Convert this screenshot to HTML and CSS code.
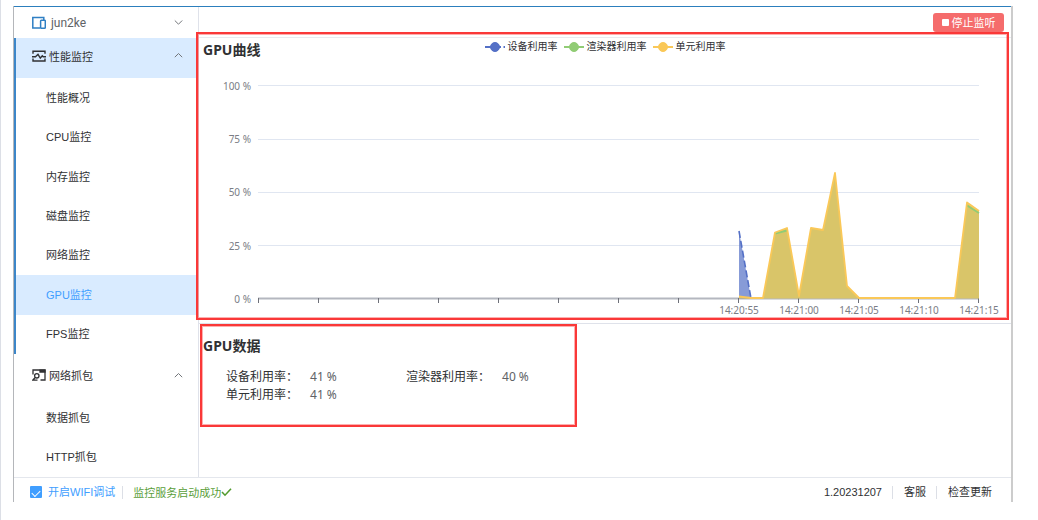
FILE: index.html
```
<!DOCTYPE html>
<html lang="zh-CN">
<head>
<meta charset="utf-8">
<title>GPU监控</title>
<link rel="stylesheet" href="styles.css">
</head>
<body>
<div class="window">
  <div class="body">
    <aside class="sidebar">
      <button class="device" type="button">
        <svg class="icon" viewBox="0 0 14 14" fill="none" stroke="#2f7fc4" stroke-width="1.5"><path d="M8 12H.8V1.500H11.800V4"/><rect x="8.600" y="4.300" width="4.700" height="7.900" rx=".8"/></svg>
        <span class="label">jun2ke</span>
        <svg class="chevron" viewBox="0 0 9 9"><path d="M.8 2.500 4.500 6.200 8.200 2.500"/></svg>
      </button>
      <nav class="menu">
        <button class="group group-active" type="button">
          <svg class="icon" viewBox="0 0 14 14" fill="none" stroke="#303133" stroke-width="1.400"><path d="M1 4.800V2.200H13V4.800M1 9.500V12H13V9.500"/><path d="M0 7.800H3.500L6 5.300 8.300 9 10.300 6.800 11.200 7.800H14"/></svg>
          <span class="label">性能监控</span>
          <svg class="chevron" viewBox="0 0 9 9"><path d="M.8 6.200 4.500 2.500 8.200 6.200"/></svg>
        </button>
        <div class="items items-long">
          <a href="#">性能概况</a>
          <a href="#">CPU监控</a>
          <a href="#">内存监控</a>
          <a href="#">磁盘监控</a>
          <a href="#">网络监控</a>
          <a href="#" class="current">GPU监控</a>
          <a href="#">FPS监控</a>
        </div>
        <button class="group" type="button">
          <svg class="icon" viewBox="0 0 14 14" fill="none" stroke="#303133" stroke-width="1.300"><path d="M1 6.500V2H13V12H8.500"/><path d="M8 2.200H13V4H8z" fill="#303133"/><circle cx="4.800" cy="7.800" r="2.200"/><path d="M3.200 9.500.8 12.200H5.500"/></svg>
          <span class="label">网络抓包</span>
          <svg class="chevron" viewBox="0 0 9 9"><path d="M.8 6.200 4.500 2.500 8.200 6.200"/></svg>
        </button>
        <div class="items">
          <a href="#">数据抓包</a>
          <a href="#">HTTP抓包</a>
        </div>
      </nav>
    </aside>
    <main class="main">
      <div class="toolbar">
        <button class="stop" type="button"><span class="stop-mark"></span>停止监听</button>
      </div>
      <section class="curve">
        <header class="curve-head">
          <h2>GPU曲线</h2>
          <ul class="legend">
            <li><svg viewBox="0 0 20 10" stroke="#5470c6" fill="#5470c6"><path d="M0 5H16M18.500 5H20" stroke-width="2"/><circle cx="10" cy="5" r="4.500"/></svg>设备利用率</li>
            <li><svg viewBox="0 0 20 10" stroke="#91cc75" fill="#91cc75"><path d="M0 5H20" stroke-width="2"/><circle cx="10" cy="5" r="4.500"/></svg>渲染器利用率</li>
            <li><svg viewBox="0 0 20 10" stroke="#fac858" fill="#fac858"><path d="M0 5H20" stroke-width="2"/><circle cx="10" cy="5" r="4.500"/></svg>单元利用率</li>
          </ul>
        </header>
        <svg class="chart" viewBox="199 62 812 261" role="img" aria-label="GPU曲线">
          <path class="grid" d="M258 85.500H979M258 139.500H979M258 192.500H979M258 245.500H979"/>
          <path class="axis" d="M258 298.500H979"/>
          <path class="ticks" d="M258.500 298v5M318.500 298v5M378.500 298v5M438.500 298v5M498.500 298v5M558.500 298v5M618.500 298v5M678.500 298v5M738.500 298v5M798.500 298v5M858.500 298v5M918.500 298v5M978.500 298v5"/>
          <path d="M739 231 751 298.500H739z" fill="#5470c6" opacity=".7"/>
          <path d="M739 231 751 298.500" fill="none" stroke="#5470c6" stroke-width="1.600" stroke-dasharray="7 3"/>
          <path class="fill" d="M739 297 751 298.500H763L775 232.500 787 228 799 295 811 228 823 230 835 173 847 286 859 298.500H955L967 203 979 211V298.500H739z"/>
          <path d="M775 233.500 787 230.500M967 205.500 979 213" fill="none" stroke="#91cc75" stroke-width="2"/>
          <path d="M739 296.500 751 298H763L775 232.500 787 228 799 296 811 228 823 230 835 173 847 286 859 298H955L967 202.500 979 211" fill="none" stroke="#fac858" stroke-width="1.800" stroke-linejoin="round"/>
          <g text-anchor="end">
            <text x="251" y="90">100 %</text><text x="251" y="143">75 %</text><text x="251" y="196">50 %</text><text x="251" y="250">25 %</text><text x="251" y="303">0 %</text>
          </g>
          <g text-anchor="middle">
            <text x="739" y="314">14:20:55</text><text x="799" y="314">14:21:00</text><text x="859" y="314">14:21:05</text><text x="919" y="314">14:21:10</text><text x="979" y="314">14:21:15</text>
          </g>
        </svg>
        <div class="mark mark-curve"></div>
      </section>
      <section class="data">
        <h2>GPU数据</h2>
        <dl class="values">
          <div><dt>设备利用率：</dt><dd>41 %</dd></div>
          <div><dt>渲染器利用率：</dt><dd>40 %</dd></div>
          <div><dt>单元利用率：</dt><dd>41 %</dd></div>
        </dl>
        <div class="mark mark-data"></div>
      </section>
    </main>
  </div>
  <footer class="footer">
    <label class="wifi"><input type="checkbox" checked>开启WIFI调试</label>
    <span class="status">监控服务启动成功<svg viewBox="0 0 11 10"><path d="M1 5 4 8.200 10 1.800"/></svg></span>
    <span class="version">1.20231207</span>
    <a href="#">客服</a>
    <a href="#">检查更新</a>
  </footer>
</div>
</body>
</html>
```
FILE: styles.css
```
* { box-sizing: border-box; }
body {
  margin: 0;
  min-height: 100vh;
  padding: 6px 25px 18px 13px;
  background: #fff;
  box-shadow: inset 1px 0 #dcdfe6;
  color: #303133;
  font-family: "Liberation Sans", "Noto Sans CJK SC", sans-serif;
  font-size: 11px;
  display: flex;
}
button { border: 0; margin: 0; font: inherit; color: inherit; background: none; }
a { color: inherit; text-decoration: none; }
h2 {
  margin: 0;
  font: bold 14px/24px "Noto Sans", "Noto Sans CJK SC", sans-serif;
}
.window {
  flex: 1;
  display: flex;
  flex-direction: column;
  border-left: 1px solid #b4b6ba;
  border-right: 2px solid #ccc;
  background: linear-gradient(#2c7fbd, #2c7fbd) top / 100% 1px no-repeat;
  padding-top: 1px;
}
.body { flex: 1; display: flex; }

.sidebar {
  width: 185px;
  border-right: 1px solid #dfe2ea;
  display: flex;
  flex-direction: column;
}
.device, .group {
  display: flex;
  align-items: center;
  width: 100%;
  padding: 0 15px 0 18px;
  text-align: left;
}
.device { height: 31px; gap: 5px; font: 12px Roboto, sans-serif; color: #606266; }
.group { height: 44px; gap: 3px; padding-bottom: 2px; }
.group-active { height: 40px; padding-bottom: 5px; background: #d9ebff; }
.label { flex: 1; }
.icon { width: 14px; height: 14px; }
.chevron { width: 9px; height: 9px; fill: none; stroke: #73767a; stroke-width: 1; }
.menu { flex: 1; }
.group-active, .items-long { border-left: 2px solid #3c86c8; }
.group-active { padding-left: 16px; }
.items { display: grid; grid-auto-rows: 1fr; height: 79px; padding-left: 2px; }
.items-long { height: 276px; padding-left: 0; }
.items a { display: flex; align-items: center; padding: 0 0 2px 30px; }
.items .current { background: #d9ebff; color: #409eff; }

.main { flex: 1; display: flex; flex-direction: column; }
.toolbar {
  height: 31px;
  padding: 6px 7px 0;
  display: flex;
  justify-content: flex-end;
  border-bottom: 1px solid #e9ebf0;
}
.stop {
  width: 71px;
  height: 19px;
  padding: 0 0 1px;
  display: flex;
  align-items: center;
  justify-content: center;
  gap: 3px;
  border-radius: 3px;
  background: #f56c6c;
  color: #fff;
}
.stop-mark { width: 7px; height: 7px; border-radius: 1px; background: #fff; }
.curve { position: relative; border-bottom: 1px solid #dfe2ea; }
.curve-head { display: grid; grid-template-columns: 1fr auto 1fr; padding-left: 4px; height: 24px; }
.legend {
  display: flex;
  gap: 6px;
  margin: 0;
  padding: 0 4px 0 0;
  list-style: none;
  font-size: 10px;
  line-height: 18px;
}
.legend li { display: flex; align-items: center; gap: 3px; height: 18px; }
.legend svg { width: 20px; height: 10px; }
.chart { display: block; width: 100%; }
.chart text { font: 10px "Noto Sans", sans-serif; fill: #7a7d85; }
.grid { stroke: #e0e6f1; }
.axis { stroke: #b4b7bf; stroke-width: 2; }
.ticks { stroke: #6e7079; }
.fill { fill: #d9c569; }
.mark {
  position: absolute;
  pointer-events: none;
  border: 2px solid #fa3838;
  box-shadow: inset 0 0 0 1px #fa383866;
}
.mark-curve { inset: -6px 2px 3px -3px; z-index: 1; }
.mark-data { left: 1px; top: 0; width: 377px; height: 103px; }
.data { position: relative; flex: 1; padding: 10px 4px; }
.values {
  display: grid;
  grid-template-columns: 180px 180px;
  margin: 10px 0 0 23px;
  font: 12px/18px "Noto Sans", "Noto Sans CJK SC", sans-serif;
}
.values div { display: flex; gap: 12px; }
.values dd { margin: 0; color: #606266; }

.footer {
  height: 25px;
  padding: 4px 19px 0 16px;
  border-top: 1px solid #e4e7ed;
  display: flex;
  align-items: center;
}
.wifi { display: flex; align-items: center; gap: 6px; color: #409eff; padding-right: 7px; border-right: 1px solid #dcdfe6; line-height: 13px; }
.wifi input {
  appearance: none;
  width: 12px;
  height: 12px;
  margin: 0;
  border-radius: 1px;
  background: #409eff;
  display: grid;
  place-items: center;
}
.wifi input::before {
  content: "";
  width: 7px;
  height: 4px;
  border: solid #fff;
  border-width: 0 0 1px 1px;
  transform: rotate(-45deg);
}
.status { display: flex; align-items: center; flex: 1; margin-left: 10px; color: #5a9e3a; }
.status svg { width: 11px; height: 10px; fill: none; stroke: #529b2e; stroke-width: 1.600; }
.version, .footer a { line-height: 13px; }
.footer a { margin-left: 10px; padding-left: 11px; border-left: 1px solid #dcdfe6; }
```
